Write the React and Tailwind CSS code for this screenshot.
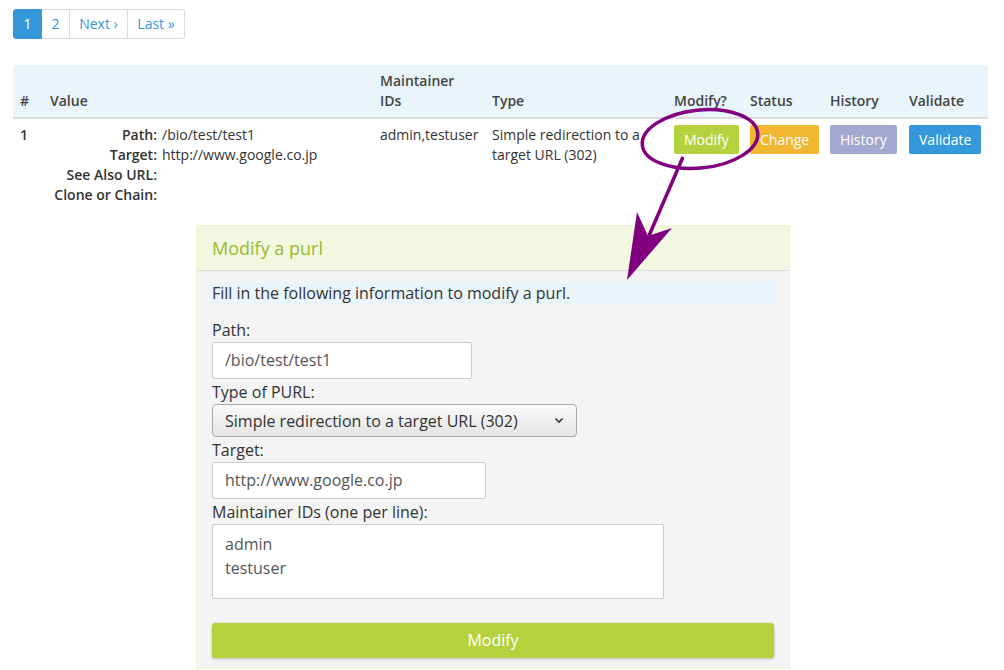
import React from "react";

const font = { fontFamily: '"Open Sans", "Noto Sans", sans-serif' };

function Pager() {
  return (
    <div className="flex h-[30px] text-[14px] leading-[28px]">
      <span className="w-[29px] text-center bg-[#3498db] border border-[#3498db] text-white rounded-l-[3px]">1</span>
      <span className="w-[28px] text-center border border-l-0 border-[#dddddd] text-[#3498db]">2</span>
      <span className="w-[58px] text-center border border-l-0 border-[#dddddd] text-[#3498db]">Next ›</span>
      <span className="w-[57px] text-center border border-l-0 border-[#dddddd] text-[#3498db] rounded-r-[3px]">Last »</span>
    </div>
  );
}

function Btn({ color, children }) {
  return (
    <span className={`inline-block h-[29px] px-[10px] leading-[29px] text-[14px] text-white rounded-[2px] ${color}`}>
      {children}
    </span>
  );
}

function Field({ label, children }) {
  return (
    <div>
      <div className="text-[16px] leading-[22px] text-[#333] mt-[2px]">{label}</div>
      <div className="mt-[1px]">{children}</div>
    </div>
  );
}

export default function App() {
  return (
    <div className="relative w-[1004px] h-[670px] overflow-hidden bg-white text-[#333]" style={font}>
      <div className="pl-[13px] pt-[9px]">
        <Pager />

        <table className="mt-[26px] w-[975px] table-fixed border-collapse text-[14px] leading-[20px]">
          <colgroup>
            <col className="w-[30px]" />
            <col className="w-[330px]" />
            <col className="w-[112px]" />
            <col className="w-[182px]" />
            <col className="w-[76px]" />
            <col className="w-[80px]" />
            <col className="w-[79px]" />
            <col className="w-[86px]" />
          </colgroup>
          <thead>
            <tr className="bg-[#eaf4fb] border-b-2 border-[#dddddd]">
              {["#", "Value", "Maintainer IDs", "Type", "Modify?", "Status", "History", "Validate"].map((h) => (
                <th key={h} className="text-left align-bottom font-semibold text-[#444] pl-[7px] pr-[4px] pt-[6px] pb-[6px]">
                  {h === "Maintainer IDs" ? (
                    <>
                      Maintainer
                      <br />
                      IDs
                    </>
                  ) : (
                    h
                  )}
                </th>
              ))}
            </tr>
          </thead>
          <tbody>
            <tr className="align-top">
              <td className="pl-[7px] pt-[6px] font-semibold">1</td>
              <td className="pl-[7px] pt-[6px]">
                <div className="grid grid-cols-[107px_1fr] gap-x-[5px]">
                  <span className="text-right font-semibold">Path:</span>
                  <span>/bio/test/test1</span>
                  <span className="text-right font-semibold">Target:</span>
                  <span>http://www.google.co.jp</span>
                  <span className="text-right font-semibold whitespace-nowrap">See Also URL:</span>
                  <span></span>
                  <span className="text-right font-semibold whitespace-nowrap">Clone or Chain:</span>
                  <span></span>
                </div>
              </td>
              <td className="pl-[7px] pt-[6px]">admin,testuser</td>
              <td className="pl-[7px] pt-[6px] pr-[4px]">Simple redirection to a target URL (302)</td>
              <td className="pl-[7px] pt-[6px]">
                <Btn color="bg-[#b3d23e]">Modify</Btn>
              </td>
              <td className="pl-[7px] pt-[6px]">
                <Btn color="bg-[#f1b731]">Change</Btn>
              </td>
              <td className="pl-[7px] pt-[6px]">
                <Btn color="bg-[#a4a7cf]">History</Btn>
              </td>
              <td className="pl-[7px] pt-[6px]">
                <Btn color="bg-[#3498db]">Validate</Btn>
              </td>
            </tr>
          </tbody>
        </table>
      </div>

      <div className="ml-[196px] mt-[20px] w-[594px] border border-[#eef5d2] bg-[#f4f4f4]">
        <div className="h-[45px] bg-[#f2f7df] border-b border-[#dddddd] pl-[15px] text-[18px] font-medium leading-[44px] text-[#9cb92c]">
          Modify a purl
        </div>
        <div className="px-[15px] pt-[11px] pb-[10px]">
          <div className="ml-[-3px] pl-[3px] h-[23px] bg-[#eaf4fb] text-[16px] leading-[23px] text-[#333]">
            Fill in the following information to modify a purl.
          </div>
          <div className="mt-[14px]">
            <Field label="Path:">
              <div className="w-[260px] h-[37px] bg-white border border-[#cccccc] rounded-[2px] pl-[12px] text-[16px] leading-[35px] text-[#555]">
                /bio/test/test1
              </div>
            </Field>
            <Field label="Type of PURL:">
              <div className="w-[365px] h-[33px] border border-[#aaaaaa] rounded-[4px] bg-gradient-to-b from-[#fafafa] to-[#e4e4e4] pl-[12px] pr-[12px] flex items-center justify-between text-[16px] text-[#333]">
                <span>Simple redirection to a target URL (302)</span>
                <svg width="10" height="7" viewBox="0 0 10 7" fill="none" stroke="#333" strokeWidth="1.6">
                  <path d="M1.5 1.5 L5 5 L8.5 1.5" />
                </svg>
              </div>
            </Field>
            <Field label="Target:">
              <div className="w-[274px] h-[37px] bg-white border border-[#cccccc] rounded-[2px] pl-[12px] text-[16px] leading-[35px] text-[#555]">
                http://www.google.co.jp
              </div>
            </Field>
            <Field label="Maintainer IDs (one per line):">
              <div className="w-[452px] h-[75px] bg-white border border-[#cccccc] rounded-[2px] pl-[12px] pt-[7px] text-[16px] leading-[24px] text-[#555]">
                admin
                <br />
                testuser
              </div>
            </Field>
          </div>
          <div className="mt-[24px] h-[35px] bg-[#b3d23e] rounded-[3px] shadow-[0_1px_3px_rgba(0,0,0,0.25)] text-center text-white text-[16px] leading-[35px]">
            Modify
          </div>
        </div>
      </div>

      <svg className="absolute inset-0 pointer-events-none" width="1004" height="670">
        <ellipse cx="700" cy="139" rx="58" ry="29" transform="rotate(-6 700 139)" fill="none" stroke="#800080" strokeWidth="3.5" />
        <line x1="683" y1="157" x2="648" y2="238" stroke="#800080" strokeWidth="3.5" />
        <polygon points="627,280 637,212 648,236 672,228" fill="#800080" />
      </svg>
    </div>
  );
}
